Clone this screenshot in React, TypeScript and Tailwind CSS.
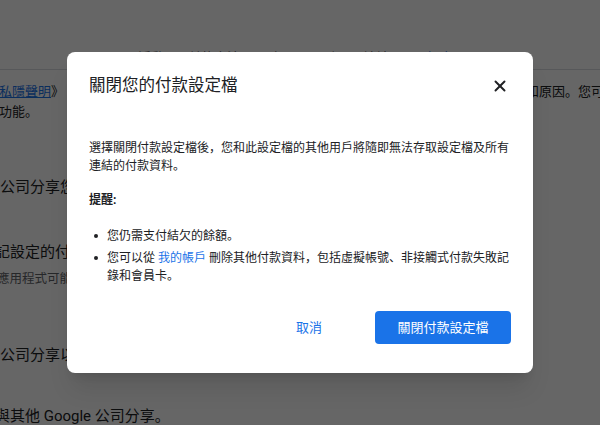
import { X } from "lucide-react"

const font = "font-['Roboto','Noto_Sans_CJK_SC',sans-serif]"

function BackgroundPage() {
  return (
    <div className="flex flex-col text-[#202124]">
      <div className="h-[70px] flex items-end pb-[2px] border-b border-[#dadce0] text-[13px] leading-[18px] text-[#5f6368] whitespace-nowrap">
        <span className="ml-[138px]">活動</span>
        <span className="ml-[24px]">付款方法</span>
        <span className="ml-[33px]">訂閱及服務</span>
        <span className="ml-[25px]">地址</span>
        <span className="ml-[38px] text-[#1a73e8]">設定</span>
      </div>

      <div className="mt-[13px] flex justify-between text-[13px] leading-[18px] whitespace-nowrap">
        <span className="ml-[-14px]">
          《<span className="text-[#1a73e8] underline">私隱聲明</span>》
        </span>
        <span className="w-[74px] overflow-hidden">和原因。您可以</span>
      </div>
      <div className="mt-[2px] text-[13px] leading-[18px] ml-[-1px] whitespace-nowrap">功能。</div>

      <div className="mt-[55px] text-[15px] leading-[22px] whitespace-nowrap">公司分享您的資料</div>

      <div className="mt-[43px] text-[15px] leading-[22px] ml-[-5px] whitespace-nowrap">記設定的付款資料</div>
      <div className="mt-[7px] text-[12.5px] leading-[18px] text-[#5f6368] ml-[-3px] whitespace-nowrap">應用程式可能會</div>

      <div className="mt-[56px] text-[15px] leading-[22px] whitespace-nowrap">公司分享以</div>

      <div className="mt-[39px] text-[15px] leading-[22px] ml-[-5px] whitespace-nowrap">與其他 Google 公司分享。</div>
    </div>
  )
}

function CloseProfileDialog() {
  return (
    <div className="w-[466px] h-[321px] bg-white rounded-lg shadow-xl flex flex-col px-[22px] pt-[22px] pb-[29px] text-[#202124]">
      <div className="flex items-center justify-between h-[24px]">
        <h1 className="text-[16.5px] leading-[24px] font-normal">關閉您的付款設定檔</h1>
        <button className="w-[24px] h-[24px] flex items-center justify-center mr-[-1px]">
          <X className="w-[18px] h-[18px] text-[#202124]" strokeWidth={2.6} />
        </button>
      </div>

      <p className="mt-[41px] text-[12px] leading-[18px]">
        選擇關閉付款設定檔後，您和此設定檔的其他用戶將隨即無法存取設定檔及所有連結的付款資料。
      </p>

      <p className="mt-[16px] text-[12px] leading-[18px] font-bold">提醒:</p>

      <ul className="mt-[18px] flex flex-col gap-[4px] text-[12px] leading-[18px]">
        <li className="flex">
          <span className="w-[18px] shrink-0 h-[18px] flex items-center">
            <span className="ml-[5px] w-[4px] h-[4px] rounded-full bg-[#202124]" />
          </span>
          <span>您仍需支付結欠的餘額。</span>
        </li>
        <li className="flex">
          <span className="w-[18px] shrink-0 h-[18px] flex items-center">
            <span className="ml-[5px] w-[4px] h-[4px] rounded-full bg-[#202124]" />
          </span>
          <span>
            您可以從 <a className="text-[#1a73e8]">我的帳戶</a> 刪除其他付款資料，包括虛擬帳號、非接觸式付款失敗記錄和會員卡。
          </span>
        </li>
      </ul>

      <div className="mt-auto flex justify-end items-center gap-[21px]">
        <button className="w-[90px] h-[33px] text-[13px] text-[#1a73e8] rounded">取消</button>
        <button className="w-[136px] h-[33px] text-[13px] text-white bg-[#1a73e8] rounded">
          關閉付款設定檔
        </button>
      </div>
    </div>
  )
}

export default function App() {
  return (
    <div className={`relative w-[600px] h-[425px] overflow-hidden bg-white ${font}`}>
      <BackgroundPage />
      <div className="absolute inset-0 bg-black/60 flex items-center justify-center">
        <CloseProfileDialog />
      </div>
    </div>
  )
}
